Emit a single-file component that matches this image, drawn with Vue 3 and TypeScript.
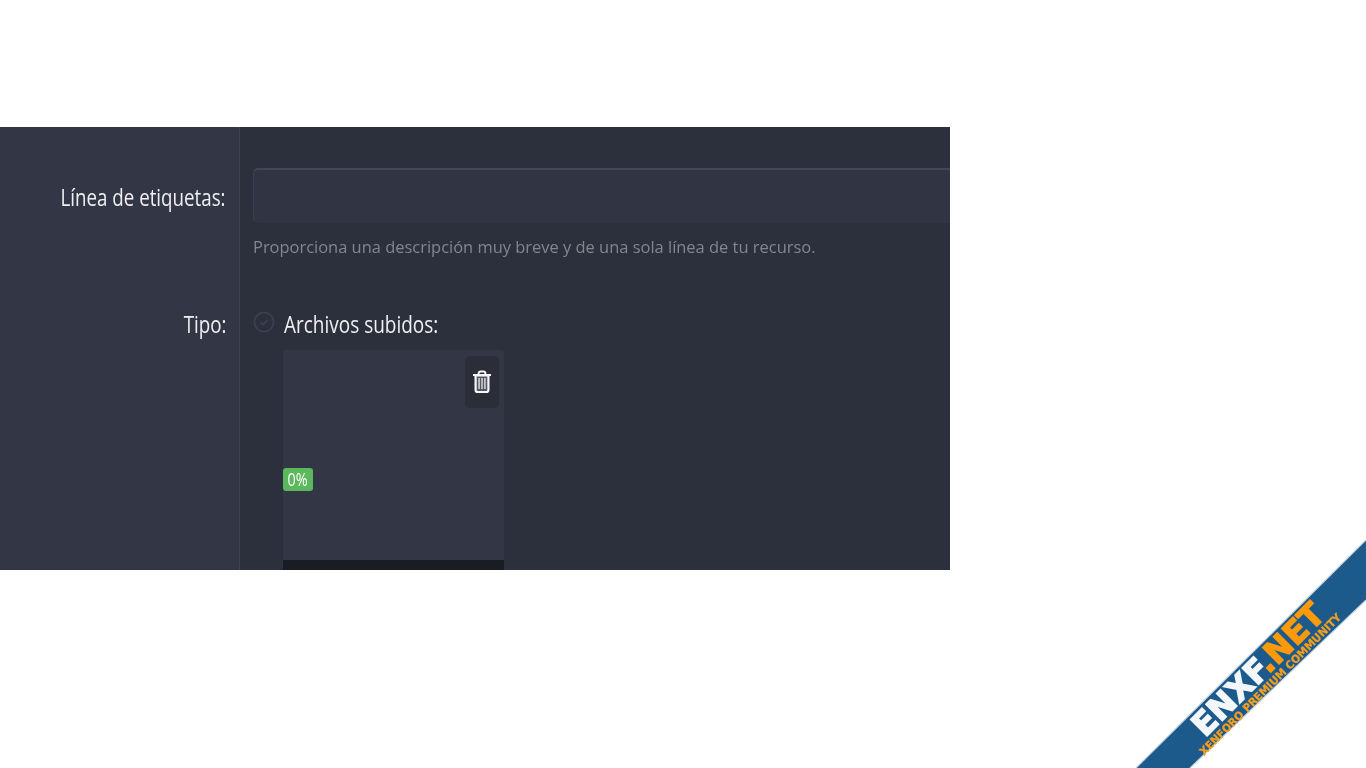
<script setup lang="ts">
const hint = 'Proporciona una descripción muy breve y de una sola línea de tu recurso.'
</script>

<template>
  <div class="page">
    <form class="panel">
      <div class="row row--first">
        <div class="row__label"><span class="squeeze">Línea de etiquetas:</span></div>
        <div class="row__field">
          <div class="input"></div>
          <div class="hint"><span class="hint__text">{{ hint }}</span></div>
        </div>
      </div>
      <div class="row row--second">
        <div class="row__label row__label--type"><span class="squeeze">Tipo:</span></div>
        <div class="row__field row__field--type">
          <div class="choice">
            <svg class="radio" width="22" height="22" viewBox="0 0 22 22" fill="none">
              <circle cx="11" cy="11" r="9.6" stroke="#3d4053" stroke-width="1.8" />
              <path d="M7.6 11.4l2.4 2.3 4.4-4.8" stroke="#3d4053" stroke-width="1.6" />
            </svg>
            <span class="choice__label">Archivos subidos:</span>
          </div>
          <div class="upload">
            <div class="upload__body">
              <button type="button" class="trash" aria-label="Eliminar">
                <svg width="20" height="24" viewBox="0 0 20 24" fill="none">
                  <path d="M6.6 4.5V3.4C6.6 2.2 7.4 1.4 8.6 1.4h2.8c1.2 0 2 .8 2 2v1.1" stroke="#f7f7f8" stroke-width="2" />
                  <path d="M1 5h18" stroke="#f7f7f8" stroke-width="2.2" />
                  <path d="M3.6 5.5h12.8V20c0 1.2-.8 2-2 2H5.6c-1.2 0-2-.8-2-2z" fill="#55565f" stroke="#f7f7f8" stroke-width="2.2" />
                  <path d="M7.1 8v11M10 8v11M12.9 8v11" stroke="#c9c9cf" stroke-width="1.7" />
                </svg>
              </button>
              <span class="badge"><span class="badge__text">0%</span></span>
            </div>
            <div class="upload__bar"></div>
          </div>
        </div>
      </div>
    </form>

    <svg class="ribbon" width="240" height="240" viewBox="0 0 240 240">
      <polygon points="240,12 240,72 64,240 10,240" fill="#1d5a8c" />
      <path d="M240 12L10 240M240 72L64 240" stroke="#c4d3de" stroke-width="1.2" fill="none" />
      <g transform="translate(79,210) rotate(-45)">
        <text class="ribbon__name" textLength="172" lengthAdjust="spacingAndGlyphs"><tspan class="ribbon__white">ENXF</tspan><tspan class="ribbon__orange">.NET</tspan></text>
      </g>
      <g transform="translate(78,228) rotate(-45)">
        <text class="ribbon__tag" textLength="195" lengthAdjust="spacingAndGlyphs">XENFORO PREMIUM COMMUNITY</text>
      </g>
    </svg>
  </div>
</template>

<style>
html, body { background: #fff; }
</style>

<style scoped>
.page {
  position: relative;
  width: 1366px;
  height: 768px;
  overflow: hidden;
  padding-top: 127px;
  box-sizing: border-box;
  font-family: 'Open Sans', 'Liberation Sans', sans-serif;
}
.panel {
  display: flex;
  flex-direction: column;
  width: 950px;
  height: 443px;
  overflow: hidden;
  background: #2c303c;
}
.row {
  display: grid;
  grid-template-columns: 240px 1fr;
}
.row--first { height: 173px; flex: none; }
.row--second { flex: 1; }
.row__label {
  box-sizing: border-box;
  padding: 57px 13px 0 0;
  text-align: right;
  background: #333644;
  border-right: 1px solid #3e4150;
  color: #f0f0f2;
  font-size: 23px;
  line-height: 26px;
}
.row__label--type { padding-top: 11px; }
.squeeze {
  display: inline-block;
  white-space: nowrap;
  transform: scaleX(0.815);
  transform-origin: right center;
}
.row__field { padding: 41px 0 0 13px; min-width: 0; }
.row__field--type { padding-top: 10px; }
.input {
  height: 55px;
  box-sizing: border-box;
  margin-right: -10px;
  background: #313443;
  border: 1px solid #3a3d4e;
  border-top: 2px solid #42455a;
  border-radius: 5px;
  border-bottom-color: #313443;
}
.hint {
  margin-top: 13px;
  color: #83858f;
  font-size: 16px;
  line-height: 22px;
  white-space: nowrap;
}
.hint__text {
  display: inline-block;
  transform: scaleX(1.028);
  transform-origin: left center;
}
.choice {
  display: flex;
  align-items: flex-start;
  gap: 9px;
  height: 40px;
  color: #f0f0f2;
  font-size: 23px;
  line-height: 28px;
}
.radio { flex: none; margin-top: 1px; }
.choice__label {
  display: inline-block;
  white-space: nowrap;
  transform: scaleX(0.825);
  transform-origin: left center;
}
.upload {
  display: flex;
  flex-direction: column;
  width: 221px;
  height: 230px;
  margin-left: 30px;
  border-radius: 3px 3px 0 0;
  overflow: hidden;
}
.upload__body {
  position: relative;
  flex: none;
  height: 210px;
  background: #333644;
}
.upload__bar { flex: 1; background: #1a1c23; }
.trash {
  position: absolute;
  top: 6px;
  right: 5px;
  display: flex;
  align-items: center;
  justify-content: center;
  width: 34px;
  height: 52px;
  padding: 0;
  border: 0;
  border-radius: 5px;
  background: #2b2d39;
}
.badge {
  position: absolute;
  top: 118px;
  left: 0;
  width: 30px;
  height: 23px;
  background: #5cb85c;
  border-radius: 3px;
  color: #fff;
  font-size: 18px;
  line-height: 22px;
  text-align: center;
}
.badge__text {
  display: inline-block;
  transform: scaleX(0.8);
}
.ribbon {
  position: absolute;
  right: 0;
  bottom: 0;
  filter: blur(0.4px);
}
.ribbon__name {
  font-family: 'DejaVu Sans', sans-serif;
  font-weight: 700;
  font-size: 32px;
  stroke-width: 1.4px;
}
.ribbon__white { fill: #f3f7fa; stroke: #f3f7fa; }
.ribbon__orange { fill: #fd9a0c; stroke: #fd9a0c; }
.ribbon__tag {
  font-family: 'DejaVu Sans', sans-serif;
  font-weight: 700;
  font-size: 11px;
  fill: #f59f1e;
  stroke: #f59f1e;
  stroke-width: 0.3px;
}
</style>
